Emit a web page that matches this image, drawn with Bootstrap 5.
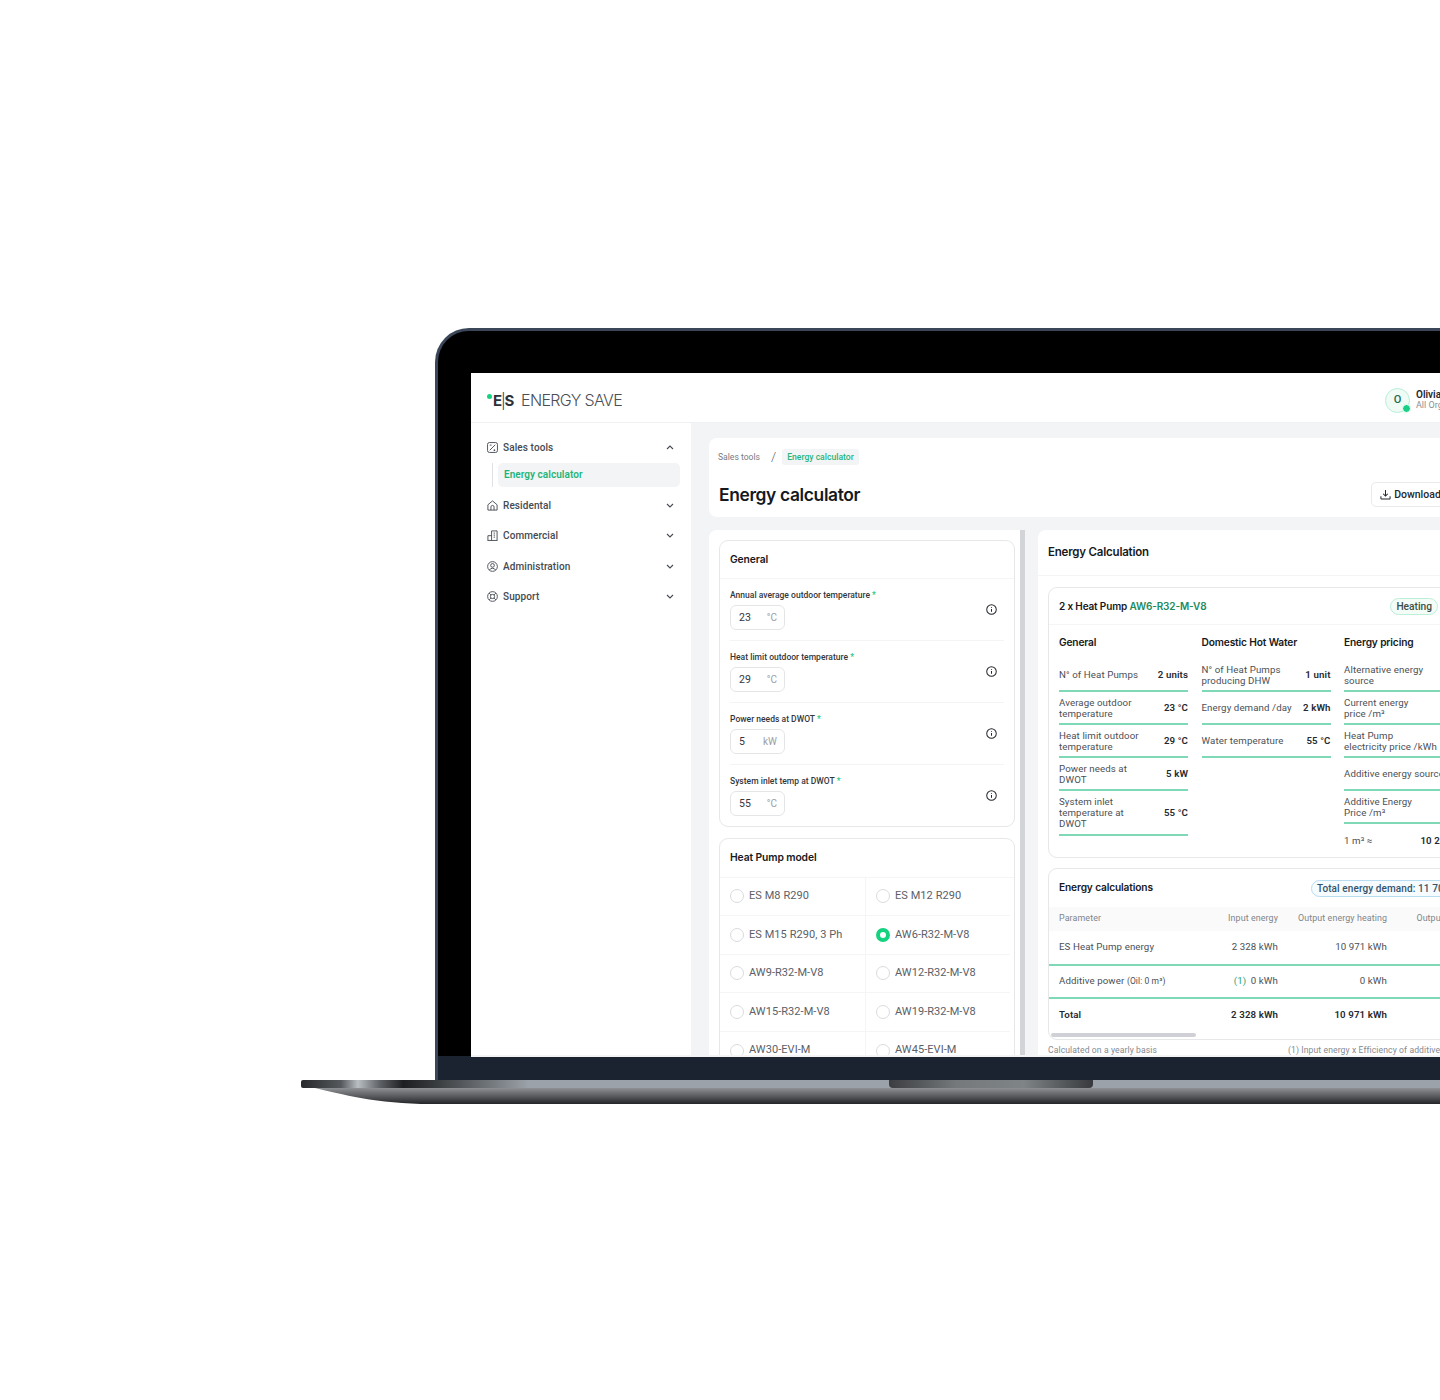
<!DOCTYPE html>
<html lang="en">
<head>
  <meta charset="UTF-8">
  <meta name="viewport" content="width=device-width, initial-scale=1">
  <title>Energy calculator</title>
  <link href="https://cdn.jsdelivr.net/npm/bootstrap@5.3.3/dist/css/bootstrap.min.css" rel="stylesheet">
  <style>
    html, body { margin: 0; background: #fff; overflow: hidden; }
    body { font-family: Roboto, "Liberation Sans", sans-serif; color: #33383f; }
    .stage { position: relative; width: 1440px; height: 1400px; overflow: hidden; }

    /* laptop */
    .lid { position: absolute; left: 435px; top: 328px; width: 1120px; height: 752px; background: #000; border: solid #3b4658; border-width: 3px 0 0 3px; border-top-left-radius: 34px; }
    .lid-chin { position: absolute; left: 0; right: 0; bottom: 0; height: 24px; background: #1b2230; }
    .screen { position: absolute; left: 33px; top: 42px; width: 1100px; height: 684px; background: #fff; overflow: hidden; display: flex; flex-direction: column; border-bottom: 2px solid #f4f4f4; }
    .base { position: absolute; left: 301px; top: 1080px; }

    /* header */
    .app-top { height: 50px; flex: none; padding: 0 16px; border-bottom: 1px solid #f0f1f3; }
    .logo { font-family: Inter, sans-serif; font-size: 16px; letter-spacing: -.65px; font-weight: 300; color: #4a4f57; line-height: 1; padding-top: 4px; }
    .logo b { font-weight: 700; color: #2c3138; font-size: 15px; letter-spacing: -.2px; margin-right: 7px; }
    .logo b span { font-weight: 300; margin: 0 -1px; }
    .logo i { display: inline-block; width: 5px; height: 5px; border-radius: 50%; background: #12d37f; vertical-align: 7px; margin-right: 1px; }
    .user-box { width: 170px; margin-top: 5px; }
    .avatar { position: relative; width: 25px; height: 25px; flex: none; border-radius: 50%; border: 1px solid #b8efd8; background: #f0fbf6; color: #1d6b52; font-size: 11px; font-weight: 500; }
    .avatar span { position: absolute; right: -2px; bottom: -1px; width: 9px; height: 9px; border-radius: 50%; background: #19cf85; border: 1px solid #fff; }
    .user-text { margin-left: 6px; }
    .user-name { font-size: 10px; font-weight: 600; color: #24282e; line-height: 11px; white-space: nowrap; }
    .user-org { font-size: 9px; color: #8a8f96; line-height: 11px; white-space: nowrap; }

    /* sidebar */
    .app-body { flex: 1; min-height: 0; }
    .side { width: 220px; flex: none; padding: 13px 11px 0 16px; }
    .side-item { height: 22px; font-size: 10px; font-weight: 500; letter-spacing: .1px; color: #454a52; margin-bottom: 8.4px; }
    .side-item > svg:first-child { margin-right: 5px; flex: none; }
    .side-item .chev { margin-left: auto; margin-right: 6px; }
    .side-sub { margin: -3px 0 7px 5px; padding-left: 5px; border-left: 1px solid #dfe1e4; height: 24px; }
    .side-sub div { height: 24px; padding-left: 6px; background: #f3f4f6; border-radius: 5px; color: #1fb57a; font-size: 10px; font-weight: 600; line-height: 24px; letter-spacing: .05px; }

    /* main */
    .work { flex: 1; min-width: 0; background: #f3f4f6; padding: 15px 0 0 18px; overflow: hidden; }
    .title-box { height: 79px; background: #fff; border-radius: 8px 0 0 8px; padding: 11px 9px 0 9px; margin-bottom: 13px; }
    .crumb { height: 16px; font-size: 8.6px; color: #777c83; }
    .crumb-sep { font-size: 13px; color: #5a5f66; margin: 0 6px 0 11px; font-weight: 300; }
    .crumb-now { background: #f3f4f6; color: #27b57f; padding: 0 5px; height: 16px; line-height: 16px; border-radius: 3px; font-weight: 500; }
    .page-name { font-family: Inter, sans-serif; font-size: 17.4px; font-weight: 600; letter-spacing: -.35px; color: #15181c; margin: 0 0 0 1px; line-height: 22px; white-space: nowrap; }
    .dl-btn { width: 130px; height: 25px; margin-left: 511px; flex: none; border: 1px solid #e8eaec; border-radius: 5px; background: #fff; font-size: 10.5px; font-weight: 500; color: #24282e; padding-left: 8px; white-space: nowrap; }
    .dl-btn svg { margin-right: 3px; }
    .title-row { margin-top: 17px; }

    .panes { align-items: flex-start; }
    .pane-l { position: relative; width: 316px; height: 530px; flex: none; background: #fff; border-radius: 8px 0 0 0; padding: 10px 10px 0 10px; overflow: hidden; margin-right: 13px; }
    .pane-l::after { content: ""; position: absolute; right: 0; top: 0; bottom: 0; width: 5px; background: #d2d4d8; }
    .pane-r { width: 560px; height: 530px; flex: none; background: #fff; border-radius: 8px 0 0 0; overflow: hidden; }

    .box { border: 1px solid #e6e7e9; border-radius: 9px; background: #fff; }
    .box-head { font-family: Inter, sans-serif; font-size: 10.3px; font-weight: 600; letter-spacing: -.1px; color: #17191d; border-bottom: 1px solid #f5f5f6; }
    .field-box { height: 287px; margin-bottom: 11px; }
    .field-box .box-head { height: 38px; line-height: 36px; padding-left: 10px; }
    .field { height: 62px; margin: 0 10px; padding-top: 10px; border-bottom: 1px solid #f3f4f5; position: relative; }
    .field:last-child { border-bottom: 0; }
    .field-label { font-size: 8.5px; line-height: 12px; color: #33373d; font-weight: 500; letter-spacing: .02px; }
    .field-label em { color: #19c987; font-style: normal; }
    .field-input { width: 55px; height: 25px; margin-top: 4px; border: 1px solid #e3e5e7; border-radius: 6px; padding: 0 7px 0 8px; font-size: 10.5px; color: #33373d; }
    .field-input span { color: #9a9ea4; font-size: 10px; }
    .field-info { position: absolute; right: 7px; top: 25px; }

    .model-box .box-head { height: 38.5px; line-height: 36px; padding-left: 10px; }
    .model-grid { display: grid; grid-template-columns: 145px 145px; }
    .model-opt { height: 38.6px; padding-left: 10px; font-size: 11px; letter-spacing: .06px; color: #5b6067; border-bottom: 1px solid #f5f5f6; white-space: nowrap; }
    .model-opt:nth-child(even) { border-left: 1px solid #f5f5f6; }
    .ring { width: 14px; height: 14px; border-radius: 50%; border: 1px solid #d9dbde; margin-right: 5px; flex: none; background: #fff; }
    .ring.on { border: 4px solid #14d27f; }

    .pane-head { font-family: Inter, sans-serif; height: 46px; line-height: 45px; padding-left: 10px; font-size: 11.5px; font-weight: 600; letter-spacing: -.2px; color: #17191d; border-bottom: 1px solid #f3f4f5; }
    .pane-inner { padding: 11px 0 0 10px; }
    .pump-box { height: 271px; margin-bottom: 10px; width: 520px; }
    .pump-head { font-family: Inter, sans-serif; height: 37px; padding: 0 10px; font-size: 10px; font-weight: 600; letter-spacing: -.15px; color: #17191d; border-bottom: 1px solid #f5f5f6; }
    .pump-model { color: #1c8b5e; }
    .chip { display: inline-block; height: 17px; line-height: 15px; border: 1px solid #bdeeda; background: #f4fcf8; border-radius: 9px; padding: 0 5px; font-family: Roboto, sans-serif; font-size: 10.2px; font-weight: 500; letter-spacing: 0; color: #3a4f48; }
    .chip-row { margin-left: 184px; gap: 3px; }
    .spec-cols { display: flex; gap: 13.5px; padding: 0 10px; }
    .spec-col { width: 129px; flex: none; }
    .spec-title { font-family: Inter, sans-serif; height: 34px; line-height: 35px; font-size: 10.2px; font-weight: 600; letter-spacing: -.15px; color: #17191d; }
    .spec-row { min-height: 33px; padding: 2px 0; border-bottom: 2px solid #7fd9b6; font-size: 9.7px; line-height: 11px; letter-spacing: .1px; color: #4a4f56; justify-content: space-between; align-items: center; gap: 6px; display: flex; }
    .spec-row.tall { min-height: 45px; }
    .spec-row.plain { border-bottom: 0; }
    .spec-row b { font-weight: 600; color: #25292f; white-space: nowrap; }
    .spec-row span { white-space: nowrap; }

    .calc-box { height: 172px; overflow: hidden; position: relative; width: 520px; }
    .calc-head { height: 38px; padding: 0 10px; }
    .calc-name { font-family: Inter, sans-serif; font-size: 10.2px; font-weight: 600; letter-spacing: -.15px; color: #17191d; white-space: nowrap; }
    .chip-blue { display: inline-block; height: 17px; line-height: 15px; border: 1px solid #b7dcf0; background: #f5fbfe; border-radius: 9px; padding: 0 5px; font-size: 10px; font-weight: 500; letter-spacing: .1px; color: #34536b; margin-left: 158px; white-space: nowrap; }
    .calc-table { width: 518px; table-layout: fixed; border-collapse: collapse; font-size: 9.7px; letter-spacing: .1px; color: #4a4f56; }
    .calc-table th { height: 24px; padding-top: 1px; background: #fafafa; font-weight: 400; font-size: 8.9px; color: #80858b; white-space: nowrap; }
    .calc-table td { height: 33px; border-bottom: 2px solid #7fd9b6; white-space: nowrap; }
    .calc-table tr:last-child td { border-bottom: 0; font-weight: 600; color: #25292f; }
    .calc-table tr:first-child td { height: 34px; padding-top: 1px; }
    .calc-table .num { text-align: right; }
    .calc-table .first { padding-left: 10px; }
    .calc-table small { font-size: 8.5px; }
    .calc-table .mark-one { color: #2aa57a; margin-right: 2px; }
    .col-a { width: 131px; } .col-b { width: 99px; } .col-c { width: 109px; } .col-d { width: 118px; } .col-e { width: 61px; }
    .bar-track { position: absolute; left: 2px; top: 164px; width: 145px; height: 4px; border-radius: 2px; background: #cfd1d6; }
    .calc-foot { font-size: 8.6px; letter-spacing: .1px; color: #85898f; padding-top: 4px; width: 520px; }
    .calc-foot span + span { margin-left: 131px; }
  </style>
</head>
<body>
<div class="stage">

  <!-- laptop lid -->
  <div class="lid">
    <div class="lid-chin"></div>
    <div class="screen">

      <div class="app-top d-flex align-items-center justify-content-between">
        <div class="logo"><i></i><b>E<span>|</span>S</b>ENERGY SAVE</div>
        <div class="user-box d-flex align-items-center">
          <div class="avatar d-flex align-items-center justify-content-center">O<span></span></div>
          <div class="user-text">
            <div class="user-name">Olivia Rhye</div>
            <div class="user-org">All Organizations</div>
          </div>
        </div>
      </div>

      <div class="app-body d-flex">
        <!-- sidebar -->
        <aside class="side">
          <div class="side-item d-flex align-items-center">
            <svg width="11" height="11" viewBox="0 0 12 12" fill="none" stroke="#454a52" stroke-width="1"><rect x=".6" y=".6" width="10.8" height="10.8" rx="2"/><path d="M3 9l6-6M7.2 9h1.8M8.1 8.1v1.8M3 3.4h2"/></svg>
            Sales tools
            <svg class="chev" width="8" height="5" viewBox="0 0 8 5" fill="none" stroke="#454a52" stroke-width="1.1"><path d="M1 4l3-3 3 3"/></svg>
          </div>
          <div class="side-sub"><div>Energy calculator</div></div>
          <div class="side-item d-flex align-items-center">
            <svg width="11" height="11" viewBox="0 0 12 12" fill="none" stroke="#454a52" stroke-width="1"><path d="M1 5.2L6 1l5 4.2V11H1z" stroke-linejoin="round"/><path d="M4.3 11V7.6a1.7 1.7 0 013.4 0V11"/></svg>
            Residental
            <svg class="chev" width="8" height="5" viewBox="0 0 8 5" fill="none" stroke="#454a52" stroke-width="1.1"><path d="M1 1l3 3 3-3"/></svg>
          </div>
          <div class="side-item d-flex align-items-center">
            <svg width="11" height="11" viewBox="0 0 12 12" fill="none" stroke="#454a52" stroke-width="1"><path d="M.6 11.4h10.8M1 11.4V6.2h4M5 11.4V1h6v10.4M7.2 3.4h1.6M7.2 5.6h1.6M7.2 7.8h1.6"/></svg>
            Commercial
            <svg class="chev" width="8" height="5" viewBox="0 0 8 5" fill="none" stroke="#454a52" stroke-width="1.1"><path d="M1 1l3 3 3-3"/></svg>
          </div>
          <div class="side-item d-flex align-items-center">
            <svg width="11" height="11" viewBox="0 0 12 12" fill="none" stroke="#454a52" stroke-width="1"><circle cx="6" cy="6" r="5.3"/><circle cx="6" cy="4.8" r="2"/><path d="M2.6 10a3.8 3.8 0 016.8 0"/></svg>
            Administration
            <svg class="chev" width="8" height="5" viewBox="0 0 8 5" fill="none" stroke="#454a52" stroke-width="1.1"><path d="M1 1l3 3 3-3"/></svg>
          </div>
          <div class="side-item d-flex align-items-center">
            <svg width="11" height="11" viewBox="0 0 12 12" fill="none" stroke="#454a52" stroke-width="1"><circle cx="6" cy="6" r="5.3"/><circle cx="6" cy="6" r="2.3"/><path d="M2.3 2.3l2 2M9.7 2.3l-2 2M2.3 9.7l2-2M9.7 9.7l-2-2"/></svg>
            Support
            <svg class="chev" width="8" height="5" viewBox="0 0 8 5" fill="none" stroke="#454a52" stroke-width="1.1"><path d="M1 1l3 3 3-3"/></svg>
          </div>
        </aside>

        <!-- main area -->
        <main class="work">
          <div class="title-box">
            <div class="crumb d-flex align-items-center">
              Sales tools <span class="crumb-sep">/</span> <span class="crumb-now">Energy calculator</span>
            </div>
            <div class="title-row d-flex align-items-center">
              <h1 class="page-name">Energy calculator</h1>
              <div class="dl-btn d-flex align-items-center">
                <svg width="11" height="11" viewBox="0 0 12 12" fill="none" stroke="#24282e" stroke-width="1.1"><path d="M6 1v6.6M3.4 5.2L6 7.8l2.6-2.6M1 8v2.4c0 .4.3.6.6.6h8.8c.3 0 .6-.2.6-.6V8"/></svg>
                Download report
              </div>
            </div>
          </div>

          <div class="panes d-flex">
            <!-- left pane -->
            <section class="pane-l">
              <div class="box field-box">
                <div class="box-head">General</div>
                <div class="field">
                  <div class="field-label">Annual average outdoor temperature <em>*</em></div>
                  <div class="field-input d-flex align-items-center justify-content-between">23 <span>°C</span></div>
                  <svg class="field-info" width="11" height="11" viewBox="0 0 12 12" fill="none" stroke="#22262b" stroke-width="1.1"><circle cx="6" cy="6" r="5.2"/><path d="M6 5.4v3M6 3.2v1"/></svg>
                </div>
                <div class="field">
                  <div class="field-label">Heat limit outdoor temperature <em>*</em></div>
                  <div class="field-input d-flex align-items-center justify-content-between">29 <span>°C</span></div>
                  <svg class="field-info" width="11" height="11" viewBox="0 0 12 12" fill="none" stroke="#22262b" stroke-width="1.1"><circle cx="6" cy="6" r="5.2"/><path d="M6 5.4v3M6 3.2v1"/></svg>
                </div>
                <div class="field">
                  <div class="field-label">Power needs at DWOT <em>*</em></div>
                  <div class="field-input d-flex align-items-center justify-content-between">5 <span>kW</span></div>
                  <svg class="field-info" width="11" height="11" viewBox="0 0 12 12" fill="none" stroke="#22262b" stroke-width="1.1"><circle cx="6" cy="6" r="5.2"/><path d="M6 5.4v3M6 3.2v1"/></svg>
                </div>
                <div class="field">
                  <div class="field-label">System inlet temp at DWOT <em>*</em></div>
                  <div class="field-input d-flex align-items-center justify-content-between">55 <span>°C</span></div>
                  <svg class="field-info" width="11" height="11" viewBox="0 0 12 12" fill="none" stroke="#22262b" stroke-width="1.1"><circle cx="6" cy="6" r="5.2"/><path d="M6 5.4v3M6 3.2v1"/></svg>
                </div>
              </div>

              <div class="box model-box">
                <div class="box-head">Heat Pump model</div>
                <div class="model-grid">
                  <div class="model-opt d-flex align-items-center"><span class="ring"></span>ES M8 R290</div>
                  <div class="model-opt d-flex align-items-center"><span class="ring"></span>ES M12 R290</div>
                  <div class="model-opt d-flex align-items-center"><span class="ring"></span>ES M15 R290, 3 Ph</div>
                  <div class="model-opt d-flex align-items-center"><span class="ring on"></span>AW6-R32-M-V8</div>
                  <div class="model-opt d-flex align-items-center"><span class="ring"></span>AW9-R32-M-V8</div>
                  <div class="model-opt d-flex align-items-center"><span class="ring"></span>AW12-R32-M-V8</div>
                  <div class="model-opt d-flex align-items-center"><span class="ring"></span>AW15-R32-M-V8</div>
                  <div class="model-opt d-flex align-items-center"><span class="ring"></span>AW19-R32-M-V8</div>
                  <div class="model-opt d-flex align-items-center"><span class="ring"></span>AW30-EVI-M</div>
                  <div class="model-opt d-flex align-items-center"><span class="ring"></span>AW45-EVI-M</div>
                </div>
              </div>
            </section>

            <!-- right pane -->
            <section class="pane-r">
              <div class="pane-head">Energy Calculation</div>
              <div class="pane-inner">
                <div class="box pump-box">
                  <div class="pump-head d-flex align-items-center">
                    <div>2 x Heat Pump <span class="pump-model">AW6-R32-M-V8</span></div>
                    <div class="chip-row d-flex"><span class="chip">Heating</span><span class="chip">Cooling</span></div>
                  </div>
                  <div class="spec-cols">
                    <div class="spec-col">
                      <div class="spec-title">General</div>
                      <div class="spec-row"><span>N° of Heat Pumps</span><b>2 units</b></div>
                      <div class="spec-row"><span>Average outdoor<br>temperature</span><b>23 °C</b></div>
                      <div class="spec-row"><span>Heat limit outdoor<br>temperature</span><b>29 °C</b></div>
                      <div class="spec-row"><span>Power needs at<br>DWOT</span><b>5 kW</b></div>
                      <div class="spec-row tall"><span>System inlet<br>temperature at<br>DWOT</span><b>55 °C</b></div>
                    </div>
                    <div class="spec-col">
                      <div class="spec-title">Domestic Hot Water</div>
                      <div class="spec-row"><span>N° of Heat Pumps<br>producing DHW</span><b>1 unit</b></div>
                      <div class="spec-row"><span>Energy demand /day</span><b>2 kWh</b></div>
                      <div class="spec-row"><span>Water temperature</span><b>55 °C</b></div>
                    </div>
                    <div class="spec-col">
                      <div class="spec-title">Energy pricing</div>
                      <div class="spec-row"><span>Alternative energy<br>source</span><b>Oil</b></div>
                      <div class="spec-row"><span>Current energy<br>price /m³</span><b>1 €</b></div>
                      <div class="spec-row"><span>Heat Pump<br>electricity price /kWh</span><b>1 €</b></div>
                      <div class="spec-row"><span>Additive energy source</span><b>Oil</b></div>
                      <div class="spec-row"><span>Additive Energy<br>Price /m³</span><b>1 €</b></div>
                      <div class="spec-row plain"><span>1 m³ ≈</span><b>10 200 kWh</b></div>
                    </div>
                  </div>
                </div>

                <div class="box calc-box">
                  <div class="calc-head d-flex align-items-center">
                    <div class="calc-name">Energy calculations</div>
                    <span class="chip-blue">Total energy demand: 11 700 kWh</span>
                  </div>
                  <table class="calc-table">
                    <colgroup><col class="col-a"><col class="col-b"><col class="col-c"><col class="col-d"><col class="col-e"></colgroup>
                    <thead>
                      <tr><th class="first">Parameter</th><th class="num">Input energy</th><th class="num">Output energy heating</th><th class="num">Output energy cooling</th><th></th></tr>
                    </thead>
                    <tbody>
                      <tr><td class="first">ES Heat Pump energy</td><td class="num">2 328 kWh</td><td class="num">10 971 kWh</td><td class="num">0 kWh</td><td></td></tr>
                      <tr><td class="first">Additive power <small>(Oil: 0 m³)</small></td><td class="num"><span class="mark-one">(1)</span> 0 kWh</td><td class="num">0 kWh</td><td class="num">0 kWh</td><td></td></tr>
                      <tr><td class="first">Total</td><td class="num">2 328 kWh</td><td class="num">10 971 kWh</td><td class="num">0 kWh</td><td></td></tr>
                    </tbody>
                  </table>
                  <div class="bar-track"></div>
                </div>
                <div class="calc-foot d-flex"><span>Calculated on a yearly basis</span><span>(1) Input energy x Efficiency of additive power</span></div>
              </div>
            </section>
          </div>
        </main>
      </div>
    </div>
  </div>

  <!-- laptop base -->
  <svg class="base" width="1139" height="24" viewBox="0 0 1139 24">
    <defs>
      <linearGradient id="stripH" x1="0" x2="1" y1="0" y2="0">
        <stop offset="0" stop-color="#26282b"/><stop offset=".035" stop-color="#55585c"/><stop offset=".05" stop-color="#b9bec2"/><stop offset=".07" stop-color="#5b5e62"/><stop offset=".09" stop-color="#1c1e20"/><stop offset=".12" stop-color="#3a3d40"/><stop offset=".2" stop-color="#9ca2a9"/><stop offset="1" stop-color="#9ca2a9"/>
      </linearGradient>
      <linearGradient id="lowV" x1="0" x2="0" y1="0" y2="1">
        <stop offset="0" stop-color="#8d9094"/><stop offset=".55" stop-color="#55575a"/><stop offset="1" stop-color="#232427"/>
      </linearGradient>
      <linearGradient id="notchH" x1="0" x2="1" y1="0" y2="0">
        <stop offset="0" stop-color="#3b3d40"/><stop offset=".33" stop-color="#75797c"/><stop offset=".66" stop-color="#7f8486"/><stop offset="1" stop-color="#37393c"/>
      </linearGradient>
    </defs>
    <path d="M14 8C40 14 75 24 130 24H1139V8z" fill="url(#lowV)"/>
    <path d="M2 0H1139V8H2a2 2 0 01-2-2V2a2 2 0 012-2z" fill="url(#stripH)"/>
    <path d="M588 0H792V4a4 4 0 01-4 4H592a4 4 0 01-4-4z" fill="url(#notchH)"/>
  </svg>
</div>

<script src="https://cdn.jsdelivr.net/npm/bootstrap@5.3.3/dist/js/bootstrap.bundle.min.js"></script>
</body>
</html>
